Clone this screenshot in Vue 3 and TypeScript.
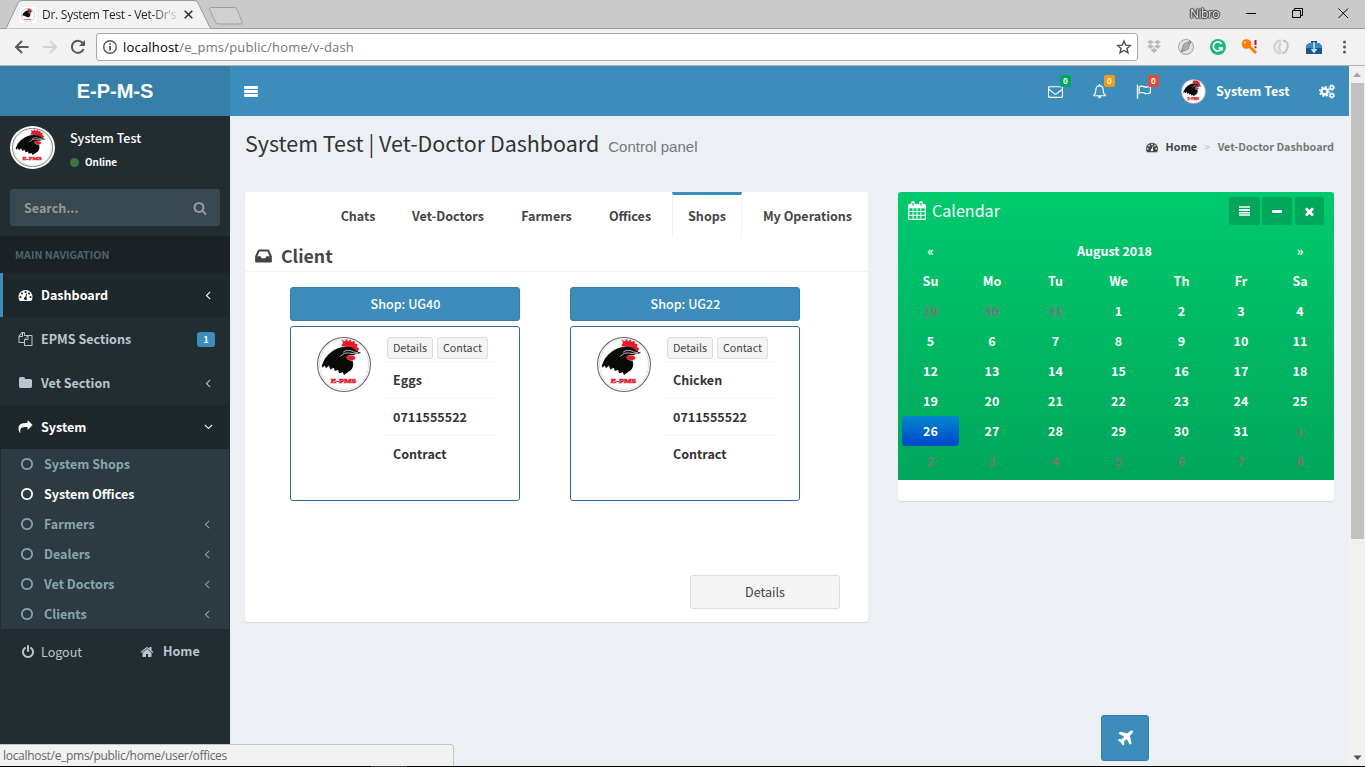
<script setup lang="ts">
import { h } from 'vue'

const paths: Record<string, string> = {
  envelope:
    'M1664 1504v-768q-32 36-69 66-268 206-426 338-51 43-83 67t-86.500 48.500-102.500 24.500h-2q-48 0-102.500-24.500t-86.500-48.500-83-67q-158-132-426-338-37-30-69-66v768q0 13 9.500 22.500t22.500 9.500h1472q13 0 22.500-9.500t9.500-22.500zm0-1051v-24.500l-.5-13-3-12.500-5.500-9-9-7.500-14-2.500h-1472q-13 0-22.500 9.500t-9.500 22.500q0 168 147 284 193 152 401 317 6 5 35 29.500t46 37.500 44.500 31.500 50.500 27.500 43 9h2q20 0 43-9t50.500-27.500 44.500-31.500 46-37.500 35-29.500q208-165 401-317 54-43 100.500-115.500t46.500-131.500zm128-37v1088q0 66-47 113t-113 47h-1472q-66 0-113-47t-47-113v-1088q0-66 47-113t113-47h1472q66 0 113 47t47 113z',
  home:
    'M1472 992v480q0 26-19 45t-45 19h-384v-384h-256v384h-384q-26 0-45-19t-19-45v-480q0-1 .5-3t.5-3l575-474 575 474q1 2 1 6zm223-69l-62 74q-8 9-21 11h-3q-13 0-21-7l-692-577-692 577q-12 8-24 7-13-2-21-11l-62-74q-8-10-7-23.500t11-21.500l719-599q32-26 76-26t76 26l244 204v-195q0-14 9-23t23-9h192q14 0 23 9t9 23v408l219 182q10 8 11 21.500t-7 23.500z',
  search:
    'M1216 832q0-185-131.500-316.500t-316.500-131.500-316.500 131.500-131.500 316.500 131.500 316.500 316.500 131.500 316.500-131.500 131.500-316.500zm512 832q0 52-38 90t-90 38q-54 0-90-38l-343-342q-179 124-399 124-143 0-273.500-55.500t-225-150-150-225-55.500-273.500 55.500-273.500 150-225 225-150 273.500-55.500 273.500 55.500 225 150 150 225 55.500 273.500q0 220-124 399l343 343q37 37 37 90z',
  angle:
    'M1203 544q0 13-10 23l-393 393 393 393q10 10 10 23t-10 23l-50 50q-10 10-23 10t-23-10l-466-466q-10-10-10-23t10-23l466-466q10-10 23-10t23 10l50 50q10 10 10 23z',
  dashboard:
    'M384 1152q0-53-37.500-90.500t-90.500-37.500-90.500 37.500-37.500 90.500 37.500 90.500 90.500 37.500 90.500-37.500 37.500-90.500zm192-448q0-53-37.500-90.500t-90.500-37.500-90.500 37.500-37.500 90.500 37.500 90.500 90.500 37.500 90.500-37.500 37.500-90.500zm428 481l101-382q6-26-7.500-48.500t-38.500-29.500-48 6.500-30 39.500l-101 382q-60 5-107 43.500t-63 98.500q-20 77 20 146t117 89 146-20 89-117q16-60-6-117t-72-91zm660-33q0-53-37.500-90.500t-90.500-37.500-90.500 37.500-37.500 90.500 37.500 90.500 90.500 37.500 90.500-37.500 37.500-90.500zm-640-640q0-53-37.500-90.500t-90.500-37.500-90.500 37.500-37.500 90.500 37.500 90.500 90.500 37.500 90.500-37.500 37.500-90.500zm448 192q0-53-37.500-90.500t-90.500-37.500-90.500 37.500-37.500 90.500 37.500 90.500 90.500 37.500 90.500-37.500 37.500-90.500zm320 448q0 261-141 483-19 29-54 29h-1402q-35 0-54-29-141-221-141-483 0-182 71-348t191-286 286-191 348-71 348 71 286 191 191 286 71 348z',
  share:
    'M1792 640q0 26-19 45l-512 512q-19 19-45 19t-45-19-19-45v-256h-224q-98 0-175.500 6t-154 21.500-133 42.500-105.500 69.500-80 101-48.500 138.500-17.500 181q0 55 5 123 0 6 2.500 23.500t2.500 26.500q0 15-8.500 25t-23.500 10q-16 0-28-17-7-9-13-22t-13.500-30-10.500-24q-127-285-127-451 0-199 53-333 162-403 875-403h224v-256q0-26 19-45t45-19 45 19l512 512q19 19 19 45z',
  power:
    'M1664 896q0 156-61 298t-164 245-245 164-298 61-298-61-245-164-164-245-61-298q0-182 80.500-343t226.500-270q43-32 95.500-25t83.500 50q32 42 24.500 94.500t-49.500 84.500q-98 74-151.500 181t-53.500 228q0 104 40.500 198.500t109.500 163.500 163.500 109.500 198.500 40.500 198.500-40.500 163.500-109.500 109.500-163.500 40.500-198.500q0-121-53.500-228t-151.500-181q-42-32-49.500-84.500t24.500-94.500q31-43 84-50t95 25q146 109 226.500 270t80.500 343zm-640-768v640q0 52-38 90t-90 38-90-38-38-90v-640q0-52 38-90t90-38 90 38 38 90z',
  plane:
    'M1568 160q44 52 12 148t-108 172l-161 161 160 696q5 19-12 33l-128 96q-7 6-19 6-4 0-7-1-15-3-21-16l-279-508-259 259 53 194q5 17-8 31l-96 96q-9 9-23 9h-2q-15-2-24-13l-189-252-252-189q-11-7-13-23-1-13 9-25l96-97q9-9 23-9 6 0 8 1l194 53 259-259-508-279q-14-8-17-24-2-16 9-27l128-128q14-13 30-8l665 159 160-160q76-76 172-108t148 12z',
  times:
    'M1490 1322q0 40-28 68l-136 136q-28 28-68 28t-68-28l-294-294-294 294q-28 28-68 28t-68-28l-136-136q-28-28-28-68t28-68l294-294-294-294q-28-28-28-68t28-68l136-136q28-28 68-28t68 28l294 294 294-294q28-28 68-28t68 28l136 136q28 28 28 68t-28 68l-294 294 294 294q28 28 28 68z',
  folder:
    'M1728 608v704q0 92-66 158t-158 66h-1216q-92 0-158-66t-66-158v-960q0-92 66-158t158-66h320q92 0 158 66t66 158v32h672q92 0 158 66t66 158z',
  circle:
    'M896 352q-148 0-273 73t-198 198-73 273 73 273 198 198 273 73 273-73 198-198 73-273-73-273-198-198-273-73zm768 544q0 209-103 385.500t-279.500 279.500-385.500 103-385.500-103-279.500-279.500-103-385.500 103-385.500 279.500-279.500 385.500-103 385.500 103 279.500 279.500 103 385.500z',
  files:
    'M0 512L440 0H700Q820 0 820 100V384H1700Q1792 384 1792 480V1700Q1792 1792 1700 1792H800Q704 1792 704 1700V1408H96Q0 1408 0 1310ZM128 640V1280H704V1000L1090 512H692V128H576V540Q576 640 480 640ZM448 190L170 512H448ZM832 1060V1664H1664V512H1280V900Q1280 1024 1160 1024H860ZM1152 590L850 900H1152Z',
  bell:
    'M896 0Q980 0 990 160Q1400 240 1400 740Q1400 1160 1664 1300V1408Q1664 1472 1600 1472H1120Q1100 1720 896 1720T672 1472H192Q128 1472 128 1408V1300Q392 1160 392 740Q392 240 802 160Q812 0 896 0ZM896 290Q530 290 530 740Q530 1120 330 1344H1462Q1262 1120 1262 740Q1262 290 896 290ZM780 1472Q790 1600 896 1600V1640Q740 1620 740 1472Z',
  flag:
    'M160 64Q256 64 256 160V1728H96V160Q96 64 160 64ZM320 300Q640 90 960 240T1792 160V1110Q1310 1340 960 1160T320 1240ZM450 400V1010Q720 880 1010 1020T1650 1010V370Q1250 550 950 400T450 400Z',
  inbox:
    'M420 256H1372Q1430 256 1455 315L1728 910V1450Q1728 1536 1642 1536H150Q64 1536 64 1450V910L337 315Q362 256 420 256ZM490 440L290 930H600L710 1130H1082L1192 930H1502L1302 440Z',
}
const Icon = (props: { name: string }) =>
  h('svg', { class: 'icon', viewBox: '0 0 1792 1792', fill: 'currentColor', 'fill-rule': 'evenodd' }, [
    h('path', { d: paths[props.name] }),
  ])
Icon.props = ['name']

const red = '#e21b2d'
const Rooster = (props: { width: string; height: string }) =>
  h('svg', { width: props.width, height: props.height, viewBox: '0 0 100 100', preserveAspectRatio: 'none' }, [
    h('circle', { cx: 50, cy: 50, r: 49, fill: '#fff', stroke: '#666', 'stroke-width': 2 }),
    h('circle', { cx: 50, cy: 50, r: 45.5, fill: 'none', stroke: '#c4c4c4', 'stroke-width': 1 }),
    h('path', { fill: red, d: 'M45 17L48 10L46 5L52 8L54 3L58 8L62 4L64 9L69 7L70 12L75 13L74 18L78 21L75 28L66 22L57 18Z' }),
    h('path', { fill: '#0a0a08', d: 'M9 52Q14 36 27 27Q38 18 52 18Q66 17 72 25L82 29L72 31L68 33Q55 31 55 38Q57 43 66 43Q69 54 63 60Q57 64 50 69L48 64L41 66L39 60L33 62L31 56L25 59L22 52L17 57L14 52L10 56Z' }),
    h('path', { fill: 'none', stroke: '#ccc', 'stroke-width': 1.6, d: 'M48 28Q56 21 68 27L76 29Q64 31 58 29T43 35' }),
    h('path', { fill: red, d: 'M53 36Q60 31 69 35Q74 39 67 42Q57 44 53 36Z' }),
    h('text', {
      x: 49, y: 83, 'text-anchor': 'middle', textLength: 47, lengthAdjust: 'spacingAndGlyphs',
      'font-family': 'Liberation Serif, serif', 'font-weight': 'bold', 'font-size': 12, fill: red, stroke: red, 'stroke-width': 1,
    }, 'E-PMS'),
  ])
Rooster.props = ['width', 'height']

interface NavItem { icon: string; label: string; kind: string; badge?: string; arrow?: boolean }
const navItems: NavItem[] = [
  { icon: 'dashboard', label: 'Dashboard', kind: 'current', arrow: true },
  { icon: 'files', label: 'EPMS Sections', kind: '', badge: '1' },
  { icon: 'folder', label: 'Vet Section', kind: '', arrow: true },
  { icon: 'share', label: 'System', kind: 'open', arrow: true },
]
const subItems = [
  { label: 'System Shops', arrow: false, on: false },
  { label: 'System Offices', arrow: false, on: true },
  { label: 'Farmers', arrow: true, on: false },
  { label: 'Dealers', arrow: true, on: false },
  { label: 'Vet Doctors', arrow: true, on: false },
  { label: 'Clients', arrow: true, on: false },
]
const alerts = [
  { icon: 'envelope', tone: 'green' },
  { icon: 'bell', tone: 'amber' },
  { icon: 'flag', tone: 'red' },
]
const tabs = [
  { label: 'Chats', w: 66 },
  { label: 'Vet-Doctors', w: 104 },
  { label: 'Farmers', w: 83 },
  { label: 'Offices', w: 74 },
  { label: 'Shops', w: 70 },
  { label: 'My Operations', w: 121 },
]
const shops = [
  { name: 'Shop: UG40', rows: ['Eggs', '0711555522', 'Contract'] },
  { name: 'Shop: UG22', rows: ['Chicken', '0711555522', 'Contract'] },
]
const weekdays = ['Su', 'Mo', 'Tu', 'We', 'Th', 'Fr', 'Sa']
const days = Array.from({ length: 42 }, (_, i) => {
  const n = i - 2
  const muted = n < 1 || n > 31
  return { n: n < 1 ? n + 31 : n > 31 ? n - 31 : n, muted, today: n === 26 }
})
</script>

<template>
  <div class="window">
    <div class="tabstrip">
      <div class="browser-tab">
        <svg class="tab-shape" width="252" height="29" viewBox="0 0 252 29">
          <path d="M0 28.500H6L18 3Q19 .5 22 .5H194Q197 .5 198 3L210.500 28.500H252" fill="#f2f2f2" stroke="#999" />
          <path d="M211 7.500H234Q236 7.500 237 9L242 22Q242.500 24 241 24H219Q216.500 24 215.500 22L209.500 9.500Q209 7.500 211 7.500Z" fill="#d0d0d0" stroke="#a0a0a0" />
        </svg>
        <span class="favicon"><Rooster width="14" height="14" /></span>
        <span class="tab-title">Dr. System Test - Vet-Dr's</span>
        <svg class="tab-close" width="9" height="9" viewBox="0 0 9 9"><path d="M.7.7L8.300 8.300M8.300.7L.7 8.300" stroke="#333" stroke-width="1.600" /></svg>
      </div>
      <div class="window-controls">
        <span class="profile">Nibro</span>
        <svg width="131" height="28" viewBox="0 0 131 28" fill="none" stroke="#000">
          <path d="M12 13.500H22M58.500 10.500H66.500V17.500H58.500ZM60.500 10V8.500H68.500V15.500H67M104.500 8.500L114 18M114 8.500L104.500 18" />
        </svg>
      </div>
    </div>

    <div class="toolbar">
      <svg class="nav-icons" width="96" height="36" viewBox="0 0 96 36" fill="none" stroke-width="2">
        <path d="M28.500 18H16M22 12L16 18L22 24" stroke="#5a5a5a" />
        <path d="M43 18H56M50 12L56 18L50 24" stroke="#d3d3d3" />
        <path d="M82.500 14A6 6 0 1 0 83.500 20" stroke="#5a5a5a" />
        <path d="M85 11V17H79Z" fill="#5a5a5a" />
      </svg>
      <div class="omnibox">
        <svg width="16" height="16" viewBox="0 0 16 16" fill="none" stroke="#555" stroke-width="1.400"><circle cx="8" cy="8" r="6.300" /><path d="M8 7V11.500M8 4.300V5.800" stroke-width="1.800" /></svg>
        <span class="url">localhost<i>/e_pms/public/home/v-dash</i></span>
        <svg width="16" height="16" viewBox="0 0 16 16" fill="none" stroke="#505050" stroke-width="1.400"><path d="M8 2L9.800 6.100L14.300 6.500L10.900 9.400L12 13.800L8 11.500L4 13.800L5.100 9.400L1.700 6.500L6.200 6.100Z" /></svg>
      </div>
      <svg class="extensions" width="227" height="36" viewBox="0 0 227 36">
        <g fill="#b9b9b9"><path d="M9 13L12.500 11L16 13L12.500 15.200ZM16 13L19.500 11L23 13L19.500 15.200ZM9 17.500L12.500 15.300L16 17.500L12.500 19.700ZM16 17.500L19.500 15.300L23 17.500L19.500 19.700ZM12.500 21L16 19L19.500 21L16 24Z" /></g>
        <circle cx="48" cy="18" r="7.500" fill="#e1e1e1" stroke="#a5a5a5" />
        <path d="M43 23L46 15L53 12L50 20L43 23L53 12" fill="#bbb" stroke="#888" />
        <circle cx="80" cy="18" r="8" fill="#1db877" />
        <path d="M83.600 15A4.500 4.500 0 1 0 84 19H80.500M84 19V21.500" fill="none" stroke="#fff" stroke-width="1.700" />
        <circle cx="108.500" cy="15" r="4.800" fill="#ff7b00" /><circle cx="107" cy="13.500" r="1" fill="#fff" />
        <path d="M111 17L118 24" stroke="#ff7b00" stroke-width="3" /><path d="M117.500 11V16M117.500 17.300V19.300" stroke="#d01030" stroke-width="2" />
        <path d="M143 11.500A6.500 6.500 0 0 0 143 24.500M143 14Q139 18 143 23" fill="none" stroke="#d4d4d4" stroke-width="2.500" /><path d="M145 11.500Q151 12.500 149.500 18.500T144 24" fill="none" stroke="#c4c4c4" stroke-width="2" />
        <path d="M168 17L171 14H173V12H179V14H181L184 17V25H168Z" fill="#14568d" /><path d="M168 17L171 14H181L184 17V19H168Z" fill="#4287ba" /><path d="M176 13V22M173.500 20L176 23L178.500 20" fill="none" stroke="#c5ecff" stroke-width="1.500" />
        <g fill="#5a5a5a"><circle cx="206.500" cy="13" r="1.500" /><circle cx="206.500" cy="18" r="1.500" /><circle cx="206.500" cy="23" r="1.500" /></g>
      </svg>
    </div>

    <div class="page">
      <div class="site">
        <header class="topbar">
          <div class="brand">E-P-M-S</div>
          <div class="navbar">
            <span class="burger"><i /><i /><i /></span>
            <div class="alerts">
              <span v-for="a in alerts" :key="a.icon" class="alert"><Icon :name="a.icon" /><b :class="a.tone">0</b></span>
              <span class="account"><Rooster width="25" height="25" /><span>System Test</span></span>
              <svg class="gears" width="16" height="15" viewBox="0 0 16 15" fill="none" stroke="#fff">
                <circle cx="5.500" cy="7.500" r="3" stroke-width="2.400" /><circle cx="5.500" cy="7.500" r="4.800" stroke-width="1.400" stroke-dasharray="1.900 1.870" />
                <circle cx="12.800" cy="3.500" r="1.700" stroke-width="1.400" /><circle cx="12.800" cy="3.500" r="2.700" stroke-width="1" stroke-dasharray="1.200 .92" />
                <circle cx="12.800" cy="11.500" r="1.700" stroke-width="1.400" /><circle cx="12.800" cy="11.500" r="2.700" stroke-width="1" stroke-dasharray="1.200 .92" />
              </svg>
            </div>
          </div>
        </header>

        <div class="body">
          <aside class="sidebar">
            <div class="user">
              <span class="avatar"><Rooster width="41" height="39" /></span>
              <div class="user-text"><span>System Test</span><span class="online"><i />Online</span></div>
            </div>
            <div class="search"><span>Search...</span><Icon name="search" /></div>
            <div class="nav-title">MAIN NAVIGATION</div>
            <div v-for="n in navItems" :key="n.label" class="nav-item" :class="n.kind">
              <Icon :name="n.icon" /><span class="label">{{ n.label }}</span>
              <span v-if="n.badge" class="count">{{ n.badge }}</span>
              <Icon v-if="n.arrow" name="angle" class="arrow" />
            </div>
            <div class="submenu">
              <div v-for="s in subItems" :key="s.label" class="sub-item" :class="{ on: s.on }">
                <Icon name="circle" /><span class="label">{{ s.label }}</span><Icon v-if="s.arrow" name="angle" class="arrow" />
              </div>
            </div>
            <div class="foot"><Icon name="power" /><span class="logout">Logout</span><Icon name="home" /><b>Home</b></div>
          </aside>

          <main class="content">
            <div class="heading">
              <h1>System Test | Vet-Doctor Dashboard</h1><small>Control panel</small>
              <div class="crumbs"><Icon name="dashboard" /><span class="crumb-home">Home</span><span class="sep">&gt;</span><span class="crumb-page">Vet-Doctor Dashboard</span></div>
            </div>
            <div class="columns">
              <section class="panel">
                <div class="tabs">
                  <span v-for="t in tabs" :key="t.label" :class="{ active: t.label === 'Shops' }" :style="{ width: t.w + 'px' }">{{ t.label }}</span>
                </div>
                <div class="client"><Icon name="inbox" /><span>Client</span></div>
                <div class="shops">
                  <div v-for="s in shops" :key="s.name" class="shop">
                    <div class="shop-name">{{ s.name }}</div>
                    <div class="shop-card">
                      <Rooster width="54" height="55" />
                      <div class="shop-info">
                        <div class="mini-buttons"><span class="first">Details</span><span>Contact</span></div>
                        <div v-for="r in s.rows" :key="r" class="info-row">{{ r }}</div>
                      </div>
                    </div>
                  </div>
                </div>
                <div class="details">Details</div>
              </section>

              <section class="calendar">
                <div class="cal-green">
                  <div class="cal-head">
                    <svg width="18" height="20" viewBox="0 0 18 20"><path d="M1.500 3H16.500Q18 3 18 4.500V17.500Q18 19 16.500 19H1.500Q0 19 0 17.500V4.500Q0 3 1.500 3ZM1.300 7.300V10H4.600V7.300ZM5.600 7.300V10H8.500V7.300ZM9.500 7.300V10H12.400V7.300ZM13.400 7.300V10H16.700V7.300ZM1.300 11V13.800H4.600V11ZM5.600 11V13.800H8.500V11ZM9.500 11V13.800H12.400V11ZM13.400 11V13.800H16.700V11ZM1.300 14.800V17.700H4.600V14.800ZM5.600 14.800V17.700H8.500V14.800ZM9.500 14.800V17.700H12.400V14.800ZM13.400 14.800V17.700H16.700V14.800Z" fill="#fff" fill-rule="evenodd" /><path d="M5 1.800V4.800M13 1.800V4.800" stroke="#fff" stroke-width="3.600" stroke-linecap="round" /><path d="M5 2V4.800M13 2V4.800" stroke="#00c267" stroke-width="1.200" /></svg>
                    <span class="cal-title">Calendar</span>
                    <span class="tool menu"><svg width="11" height="10" viewBox="0 0 11 10"><path d="M0 1H11M0 6.700H11M0 9H11" stroke="#fff" stroke-width="1.600" /><path d="M0 4H11" stroke="#fff" stroke-width="1.800" /></svg></span>
                    <span class="tool minus"><svg width="10" height="3"><rect width="10" height="3" rx="1" fill="#fff" /></svg></span>
                    <span class="tool close"><Icon name="times" /></span>
                  </div>
                  <div class="cal-grid">
                    <span>«</span><span class="month">August 2018</span><span>»</span>
                    <span v-for="w in weekdays" :key="w">{{ w }}</span>
                    <span v-for="(d, i) in days" :key="i" :class="{ muted: d.muted, today: d.today }">{{ d.n }}</span>
                  </div>
                </div>
              </section>
            </div>
          </main>
        </div>
        <div class="plane"><Icon name="plane" /></div>
        <div class="status">localhost/e_pms/public/home/user/offices</div>
      </div>
      <div class="scrollbar">
        <svg width="16" height="17"><path d="M4 11L8 6.500L12 11Z" fill="#a3a3a3" /></svg>
        <div class="thumb" />
        <svg class="down" width="16" height="17"><path d="M4.500 6.500L8.500 11L12.500 6.500Z" fill="#505050" /></svg>
      </div>
    </div>
    <div class="edge"><i /></div>
  </div>
</template>

<style>
html, body { margin: 0; overflow: hidden; }
</style>

<style scoped>
* { box-sizing: border-box; }
.window { width: 1365px; height: 767px; display: flex; flex-direction: column; overflow: hidden; font: 400 12.54px/20px "Noto Sans CJK SC", "Noto Sans", sans-serif; color: #333; white-space: nowrap; }
.icon { width: 14px; height: 14px; flex: none; display: block; }
svg { flex: none; display: block; }

.tabstrip { height: 29px; flex: none; background: #cacaca; border-bottom: 1px solid #999; display: flex; justify-content: space-between; }
.browser-tab { position: relative; width: 252px; height: 29px; display: flex; align-items: center; padding-left: 20px; }
.tab-shape { position: absolute; left: 0; top: 0; }
.favicon { position: relative; width: 16px; height: 16px; background: #fff; padding: 1px; }
.tab-title { position: relative; width: 136px; margin-left: 6px; font: 12px/20px "Open Sans", sans-serif; letter-spacing: -.26px; background: linear-gradient(90deg, #222 108px, #ccc 134px); background-clip: text; -webkit-background-clip: text; color: transparent; }
.tab-close { position: relative; margin-left: 6px; }
.window-controls { display: flex; }
.profile { font: 12px/28px "Open Sans", sans-serif; margin-right: 15px; color: #fff; letter-spacing: -.5px; text-shadow: 0 0 1px #000, 1px 0 1px #333, -1px 0 1px #333, 0 1px 1px #333, 0 -1px 1px #333; }
.toolbar { height: 37px; flex: none; background: #f2f2f2; border-bottom: 1px solid #b4b4b4; display: flex; }
.omnibox { width: 1042px; height: 28px; margin-top: 4px; border: 1px solid #a9a9a9; border-radius: 3px; background: #fff; display: flex; align-items: center; padding: 0 5px; }
.url { flex: 1; margin-left: 5px; font: 13px/20px "Open Sans", sans-serif; letter-spacing: .19px; color: #000; }
.url i { font-style: normal; color: #767676; }

.page { height: 700px; flex: none; display: flex; }
.site { position: relative; width: 1349px; height: 700px; background: #ecf0f5; overflow: hidden; }
.topbar { height: 50px; display: flex; color: #fff; }
.brand { width: 230px; background: #367fa9; text-align: center; font: bold 20px/50px "Liberation Sans", Arial, sans-serif; }
.navbar { flex: 1; background: #3c8dbc; display: flex; align-items: center; justify-content: space-between; padding-left: 14px; }
.burger { width: 14px; display: flex; flex-direction: column; gap: 1px; }
.burger i { height: 3px; border-radius: 1px; background: #fff; }
.alerts { display: flex; align-items: center; height: 50px; }
.alert { position: relative; width: 44px; height: 50px; display: flex; align-items: center; justify-content: center; }
.alert .icon { width: 15px; height: 15px; margin-right: 2px; }
.alert b { position: absolute; right: 7px; top: 9px; width: 11px; height: 12px; border-radius: 2px; text-align: center; font-size: 8.100px; line-height: 12px; }
.green { background: #00a65a; } .amber { background: #f39c12; } .red { background: #dd4b39; }
.account { display: flex; align-items: center; gap: 10px; margin-left: 15px; font-weight: 700; width: 123px; }
.gears { margin: 0 14px 0 15px; }

.body { display: flex; height: 650px; }
.sidebar { width: 230px; background: #222d32; color: #b8c7ce; }
.user { height: 73px; padding: 10px 10px 0; display: flex; color: #fff; }
.avatar { width: 45px; height: 43px; border-radius: 50%; background: #fff; padding: 2px; }
.user-text { margin-left: 15px; display: flex; flex-direction: column; padding-top: 2px; font-weight: 500; }
.online { display: flex; align-items: center; margin-top: 4px; font-weight: 700; font-size: 9.850px; }
.online i { width: 9px; height: 9px; border-radius: 50%; background: #3c763d; margin-right: 6px; }
.search { margin: 0 10px 10px; height: 37px; border-radius: 3px; background: #374850; color: #999; display: flex; align-items: center; justify-content: space-between; padding: 0 13px 0 14px; font-weight: 700; }
.nav-title { height: 37px; padding-left: 15px; background: #1a2226; color: #4b646f; font-weight: 700; font-size: 10.650px; line-height: 38px; }
.nav-item { height: 44px; display: flex; align-items: center; padding: 0 15px; border-left: 3px solid transparent; font-weight: 700; }
.label { flex: 1; margin-left: 9px; }
.nav-item .icon:first-child { width: 15px; margin-right: -1px; }
.nav-item.current { background: #1e282c; border-color: #3c8dbc; color: #fff; }
.nav-item.open { background: #1e282c; color: #fff; border-color: #1e282c; }
.nav-item.open .arrow { transform: rotate(-90deg); }
.count { width: 18px; height: 15px; border-radius: 3px; background: #3c8dbc; color: #fff; text-align: center; font-size: 9.400px; line-height: 14px; }
.submenu { margin: 0 1px; background: #2c3b41; }
.sub-item { height: 30px; padding: 0 15px 0 19px; display: flex; align-items: center; color: #8aa4af; font-weight: 700; }
.sub-item .label { margin-left: 10px; }
.sub-item.on { color: #fff; }
.foot { height: 46px; padding-left: 21px; display: flex; align-items: center; }
.logout { width: 99px; margin-left: 6px; }
.foot b { margin: -2px 0 0 9px; }

.content { width: 1119px; padding: 15px; }
.heading { height: 61px; display: flex; }
h1 { margin: -1px 0 0; font-weight: 400; font-size: 21.460px; line-height: 26px; }
small { font: 15px/32px "Liberation Sans", Arial, sans-serif; color: #777; margin-left: 9px; }
.crumbs { display: flex; align-items: center; margin-left: auto; height: 32px; font-size: 10.750px; font-weight: 700; color: #777; }
.crumbs .icon { width: 12px; height: 12px; color: #444; }
.crumb-home { color: #444; margin-left: 8px; }
.sep { color: #bbb; margin: 0 7.500px; font-weight: 400; font-size: 10px; }
.columns { display: flex; align-items: flex-start; gap: 30px; }
.panel { width: 623px; height: 430px; background: #fff; border-radius: 3px; box-shadow: 0 1px 1px rgba(0,0,0,.1); }
.tabs { display: flex; justify-content: flex-end; gap: 5px; height: 45px; font-weight: 700; color: #444; }
.tabs span { height: 45px; line-height: 41px; padding-top: 3px; text-align: center; }
.tabs .active { padding-top: 0; border: 1px solid #f4f4f4; border-top: 3px solid #3c8dbc; border-bottom: 0; }
.client { height: 35px; display: flex; align-items: center; padding: 4px 9px 0; gap: 9px; border-bottom: 1px solid #f4f4f4; color: #444; font-weight: 700; font-size: 17.700px; }
.client .icon { width: 19px; height: 18px; }
.client span { margin: -2px 0 0 -1px; }
.shops { display: flex; gap: 50px; padding: 15px 45px 0; }
.shop { width: 230px; }
.shop-name { height: 34px; border: 1px solid #367fa9; border-radius: 3px; background: #3c8dbc; color: #fff; line-height: 32px; text-align: center; text-indent: 1px; font-weight: 500; }
.shop-card { height: 175px; margin-top: 5px; border: 1px solid #2e6da4; border-radius: 3px; display: flex; padding: 10px 0 0 25px; }
.shop-card svg { margin-left: 1px; }
.shop-info { margin-left: 13px; width: 112px; }
.mini-buttons { display: flex; gap: 4px; height: 25px; padding-left: 3px; border-bottom: 1px solid #f4f4f4; }
.mini-buttons span { height: 22px; width: 51px; border: 1px solid #ddd; border-radius: 3px; background: #f4f4f4; color: #444; text-align: center; font-size: 10.750px; line-height: 20px; }
.mini-buttons .first { width: 46px; }
.info-row { height: 37px; padding-left: 9px; border-bottom: 1px solid #f4f4f4; line-height: 36px; font-weight: 700; }
.info-row:last-child { border: 0; }
.details { width: 150px; height: 34px; margin: 74px 0 0 445px; border: 1px solid #ddd; border-radius: 3px; background: #f4f4f4; color: #444; text-align: center; line-height: 32px; }

.calendar { width: 436px; height: 309px; background: #fff; border-radius: 3px; box-shadow: 0 1px 1px rgba(0,0,0,.1); overflow: hidden; }
.cal-green { height: 288px; color: #fff; background: linear-gradient(#00ca6d, #00a65a); }
.cal-head { height: 44px; display: flex; padding: 5px 10px 0; }
.cal-head > svg { margin-top: 4px; }
.cal-title { flex: 1; margin-left: 6px; font-size: 16.100px; line-height: 27px; }
.tool { height: 28px; border-radius: 3px; background: #00a65a; display: flex; align-items: center; justify-content: center; }
.menu { width: 31px; margin-right: 2px; } .minus { width: 30px; margin-right: 3px; } .close { width: 29px; }
.close .icon { width: 13px; height: 13px; margin-right: 1px; }
.cal-grid { display: grid; grid-template-columns: 57px 66px 61px 65px 61px 58px 60px; grid-auto-rows: 30px; margin-left: 4px; font-weight: 700; text-align: center; line-height: 30px; }
.month { grid-column: span 5; }
.muted { color: #777; }
.today { border-radius: 4px; background: linear-gradient(#08c, #04c); }

.plane { position: absolute; left: 1101px; top: 649px; width: 48px; height: 46px; border: 1px solid #367fa9; border-radius: 3px; background: #3c8dbc; color: #fff; display: flex; align-items: center; justify-content: center; }
.plane .icon { width: 19px; height: 19px; }
.status { position: absolute; left: -1px; bottom: 0; width: 455px; height: 22px; border: 1px solid #c5c5c5; border-bottom: 0; border-top-right-radius: 4px; background: #f2f2f2; padding-left: 3px; color: #666; font: 12px/22px "Open Sans", sans-serif; letter-spacing: -.3px; }
.scrollbar { width: 16px; height: 700px; background: #f1f1f1; display: flex; flex-direction: column; }
.thumb { width: 13px; height: 456px; margin-left: 2px; background: #c1c1c1; }
.down { margin-top: auto; }
.edge { height: 1px; background: #000; }
.edge i { display: block; margin-left: 371px; width: 36px; height: 1px; background: #333; }
</style>
